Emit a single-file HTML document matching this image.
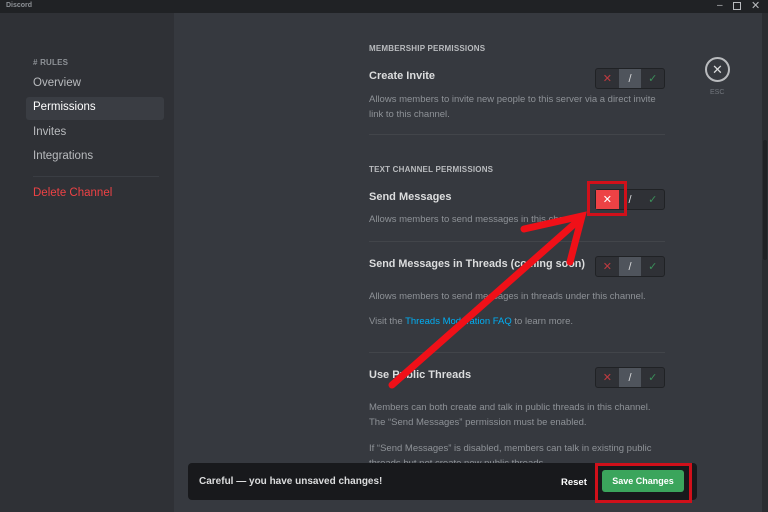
<!DOCTYPE html>
<html><head><meta charset="utf-8"><style>
*{margin:0;padding:0;box-sizing:border-box}
body{width:768px;height:512px;overflow:hidden;background:#36393f;font-family:"Liberation Sans",sans-serif;position:relative}
.a{position:absolute;white-space:nowrap}
.tb{left:0;top:0;width:768px;height:13px;background:#202225}
.sb{left:0;top:13px;width:174px;height:499px;background:#2f3136}
.nav{left:33px;font-size:11.5px;color:#b9bbbe}
.h{font-size:8px;font-weight:bold;color:#b9bbbe;letter-spacing:.2px}
.t{font-size:11px;font-weight:bold;color:#dcddde;left:369px}
.d{font-size:9.5px;color:#8e9297;left:369px;line-height:15px}
.tg{width:70px;height:21px;border:1px solid #202225;border-radius:3px;background:#2f3136;display:flex;left:595px}
.tg div{flex:1;display:flex;align-items:center;justify-content:center;font-size:11px}
.x{color:#c03b40}.m{background:#4f545c;color:#dcddde}.c{color:#3b8f5a}
.hr{left:369px;width:296px;height:1px;background:#42454a}
</style></head><body>
<div class="a tb"></div>
<div class="a" style="left:6px;top:2px;font-size:7px;font-weight:bold;color:#8e9297">Discord</div>
<div class="a" style="left:717px;top:0px;font-size:10px;color:#b9bbbe">–</div>
<div class="a" style="left:733px;top:2px;width:8px;height:8px;border:1px solid #b9bbbe"></div>
<div class="a" style="left:751px;top:-1px;font-size:11px;color:#b9bbbe">✕</div>
<div class="a sb"></div>
<div class="a" style="left:762px;top:13px;width:6px;height:499px;background:#2b2d31"></div>
<div class="a" style="left:763px;top:140px;width:4px;height:120px;background:#202225;border-radius:2px"></div>
<div class="a h" style="left:33px;top:58px;color:#8e9297"># RULES</div>
<div class="a nav" style="top:77px">Overview</div>
<div class="a" style="left:26px;top:97px;width:138px;height:23px;background:#3a3d43;border-radius:3px"></div>
<div class="a nav" style="top:101px;color:#fff">Permissions</div>
<div class="a nav" style="top:126px">Invites</div>
<div class="a nav" style="top:150px">Integrations</div>
<div class="a" style="left:33px;top:176px;width:126px;height:1px;background:#3a3d43"></div>
<div class="a nav" style="top:187px;color:#ed4245">Delete Channel</div>

<div class="a h" style="left:369px;top:44px">MEMBERSHIP PERMISSIONS</div>
<div class="a t" style="top:70px">Create Invite</div>
<div class="a tg" style="top:68px"><div class="x">✕</div><div class="m">/</div><div class="c">✓</div></div>
<div class="a d" style="top:92px">Allows members to invite new people to this server via a direct invite<br>link to this channel.</div>
<div class="a hr" style="top:134px"></div>
<div class="a h" style="left:369px;top:165px">TEXT CHANNEL PERMISSIONS</div>
<div class="a t" style="top:191px">Send Messages</div>
<div class="a tg" style="top:189px"><div style="background:#ed4245;color:#fff">✕</div><div style="color:#dcddde">/</div><div class="c">✓</div></div>
<div class="a d" style="top:212px">Allows members to send messages in this channel.</div>
<div class="a hr" style="top:241px"></div>
<div class="a t" style="top:258px;font-size:10.8px">Send Messages in Threads (coming soon)</div>
<div class="a tg" style="top:256px"><div class="x">✕</div><div class="m">/</div><div class="c">✓</div></div>
<div class="a d" style="top:289px">Allows members to send messages in threads under this channel.</div>
<div class="a d" style="top:314px">Visit the <span style="color:#00aff4">Threads Moderation FAQ</span> to learn more.</div>
<div class="a hr" style="top:352px"></div>
<div class="a t" style="top:369px">Use Public Threads</div>
<div class="a tg" style="top:367px"><div class="x">✕</div><div class="m">/</div><div class="c">✓</div></div>
<div class="a d" style="top:400px">Members can both create and talk in public threads in this channel.<br>The “Send Messages” permission must be enabled.</div>
<div class="a d" style="top:441px">If “Send Messages” is disabled, members can talk in existing public<br>threads but not create new public threads.</div>

<div class="a" style="left:705px;top:57px;width:25px;height:25px;border:2px solid #b9bbbe;border-radius:50%;color:#dcddde;font-size:13px;text-align:center;line-height:21px">✕</div>
<div class="a" style="left:710px;top:89px;font-size:7px;color:#72767d">ESC</div>

<div class="a" style="left:188px;top:463px;width:509px;height:37px;background:#18191c;border-radius:4px"></div>
<div class="a" style="left:199px;top:476px;font-size:10px;font-weight:bold;color:#dcddde">Careful — you have unsaved changes!</div>
<div class="a" style="left:561px;top:477px;font-size:9.5px;font-weight:bold;color:#fff">Reset</div>
<div class="a" style="left:602px;top:470px;width:82px;height:22px;background:#3ba55c;border-radius:3px;color:#fff;font-size:9px;font-weight:bold;text-align:center;line-height:22px">Save Changes</div>
<div class="a" style="left:595px;top:463px;width:97px;height:40px;border:3px solid #d0101a"></div>
<div class="a" style="left:587px;top:181px;width:40px;height:35px;border:3px solid #d0101a"></div>

<svg class="a" style="left:0;top:0" width="768" height="512">
<g stroke="#f01018" stroke-width="7" stroke-linecap="round" fill="none">
<line x1="392" y1="385" x2="580" y2="219"/>
<polyline points="524,229 582,216 570,262"/>
</g>
</svg>
</body></html>
